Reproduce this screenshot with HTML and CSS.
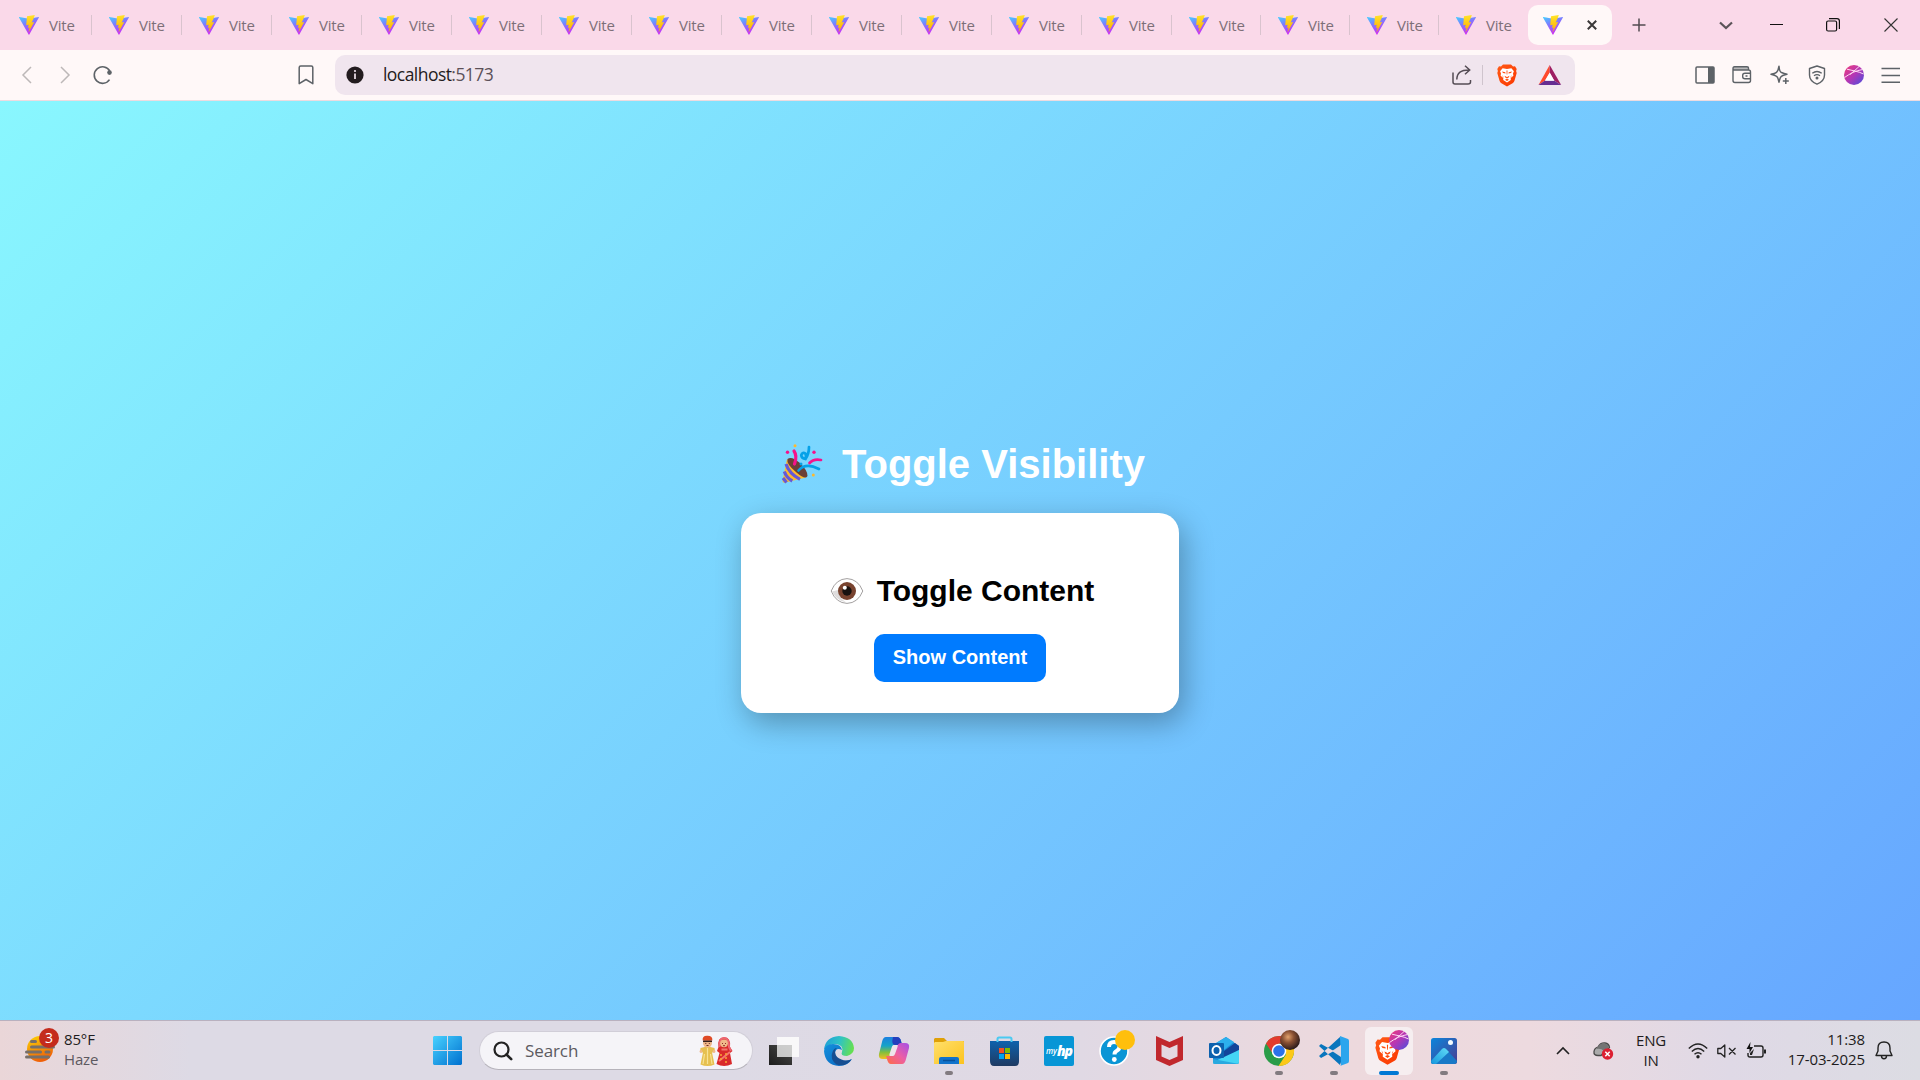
FILE: index.html
```html
<!DOCTYPE html>
<html lang="en">
<head>
<meta charset="utf-8">
<title>Vite</title>
<link rel="stylesheet" href="styles.css">
</head>
<body>
<svg class="defs" width="0" height="0">
  <defs>
    <linearGradient id="vg" x1="0" y1="0" x2=".5" y2="1"><stop offset="0" stop-color="#41d1ff"/><stop offset=".45" stop-color="#7d7bff"/><stop offset="1" stop-color="#d02cf5"/></linearGradient>
    <linearGradient id="vy" x1="0" y1="0" x2="0" y2="1"><stop offset="0" stop-color="#ffe52a"/><stop offset="1" stop-color="#ffa800"/></linearGradient>
    <linearGradient id="orb" x1="0" y1="0" x2="1" y2="1"><stop offset="0" stop-color="#f23a78"/><stop offset=".5" stop-color="#b437b5"/><stop offset="1" stop-color="#454fe0"/></linearGradient>
    <linearGradient id="win" x1="0" y1="0" x2="1" y2="1"><stop offset="0" stop-color="#48d2ff"/><stop offset="1" stop-color="#0070cf"/></linearGradient>
    <linearGradient id="haze" x1="0" y1="0" x2=".4" y2="1"><stop offset="0" stop-color="#fcd606"/><stop offset="1" stop-color="#ef6008"/></linearGradient>
    <linearGradient id="lion" x1="0" y1="0" x2="1" y2="1"><stop offset="0" stop-color="#ff5a16"/><stop offset="1" stop-color="#fb3700"/></linearGradient>
    <linearGradient id="edg" x1="0" y1=".3" x2="1" y2=".5"><stop offset="0" stop-color="#1e9fd8"/><stop offset=".5" stop-color="#2fc3c4"/><stop offset="1" stop-color="#67e04f"/></linearGradient>
    <linearGradient id="edb" x1="0" y1="0" x2="1" y2="1"><stop offset="0" stop-color="#1390dd"/><stop offset="1" stop-color="#0a63bd"/></linearGradient>
    <linearGradient id="cop1" x1="0" y1="0" x2="0" y2="1"><stop offset="0" stop-color="#1b7fe0"/><stop offset=".4" stop-color="#16a3c8"/><stop offset=".7" stop-color="#83bf3c"/><stop offset="1" stop-color="#f4bd22"/></linearGradient>
    <linearGradient id="cop2" x1="1" y1="0" x2="0" y2="1"><stop offset="0" stop-color="#a44fe8"/><stop offset=".5" stop-color="#ec5fa5"/><stop offset="1" stop-color="#ff6d3f"/></linearGradient>
    <linearGradient id="fold" x1="0" y1="0" x2="1" y2="1"><stop offset="0" stop-color="#ffdf6b"/><stop offset="1" stop-color="#fcc31e"/></linearGradient>
    <linearGradient id="store" x1="0" y1="0" x2="0" y2="1"><stop offset="0" stop-color="#0e62ad"/><stop offset="1" stop-color="#1f3a62"/></linearGradient>
    <linearGradient id="pho" x1="0" y1="0" x2="1" y2="1"><stop offset="0" stop-color="#0b86dc"/><stop offset="1" stop-color="#4c3c91"/></linearGradient>
    <linearGradient id="pk" x1="1" y1="0" x2="0" y2="1"><stop offset="0" stop-color="#61dcf7"/><stop offset="1" stop-color="#1596dd"/></linearGradient>
    <radialGradient id="face" cx=".4" cy=".35" r=".65"><stop offset="0" stop-color="#e2a26c"/><stop offset=".45" stop-color="#895033"/><stop offset="1" stop-color="#2b1b1b"/></radialGradient>
    <linearGradient id="dark" x1="0" y1="1" x2="1" y2="0"><stop offset="0" stop-color="#1c1c1c"/><stop offset="1" stop-color="#4a4a48"/></linearGradient>
    <symbol id="vite" viewBox="0 0 20 20">
      <path d="M.3 2 10 3.800l9.700-1.800q.5 0 .2.600L10.300 19.500q-.3.500-.7 0L0 2.600q-.2-.6.3-.6z" fill="url(#vg)"/>
      <path d="M15.800 0 8 1.300 7.200 10.200l2.500-.5-.8 3.200 1.700-.4-1.100 5L15.200 7l-2.500.4L14.800 3z" fill="url(#vy)"/>
    </symbol>
    <symbol id="brave" viewBox="0 0 20 22">
      <path d="M6 0h8l2 2 2-.2 1.700 2.600-.6 2 .6 2-2.300 8.200q-.4 1.200-1.400 2L10 22l-6-3.400q-1-.8-1.400-2L.3 8.400l.6-2-.6-2L2 1.800l2 .2z" fill="url(#lion)"/>
      <path d="m10 4.600 4.400-.8 2.500 3-.9 2.200.4 2.200-2.700 2.400.1 2L10 18l-3.800-2.400.1-2-2.700-2.400L4 9l-.9-2.200 2.500-3z" fill="#fff"/>
      <path d="m5 7 3.300.700L8.500 9 6 8.600zM15 7l-3.300.7-.2 1.300L14 8.600zM9.500 6h1L10.300 10h-.6zM7.500 11.300l1.500.7 1 .8 1-.8 1.500-.7-.8 1.800-1.700.9-1.700-.9zM5.200 10.300l1.300 2.200-.3.800zM14.800 10.300l-1.300 2.200.3.800zM8 15.200l2-1 2 1-2 1.400z" fill="#ff4b0c"/>
    </symbol>
    <symbol id="orbit" viewBox="0 0 20 20">
      <circle cx="10" cy="10" r="10" fill="url(#orb)"/>
      <path d="M.5 12.500C6 8.500 12 5.500 18.300 4.600M3 4.200C8 5.500 15 6.500 19.500 9M15 1.500C12.500 4 10 6 6 9.500" fill="none" stroke="#ffd9f4" stroke-width="1"/>
    </symbol>
  </defs>
</svg>

<header class="tabs" id="tabs">
  <div class="tab-list" id="tab-list"></div>
  <div class="tab-active">
    <svg width="20" height="20"><use href="#vite"/></svg>
    <svg class="tab-close" width="10" height="10" viewBox="0 0 10 10"><path d="m.8.800 8.400 8.400M9.200.8.800 9.200" stroke="#3b3838" stroke-width="2"/></svg>
  </div>
  <svg class="plus" width="14" height="14" viewBox="0 0 14 14"><path d="M7 .5v13M.5 7h13" stroke="#524b50" stroke-width="1.500"/></svg>
  <div class="window-buttons">
    <svg width="14" height="9" viewBox="0 0 14 9"><path d="m1 1.500 6 5.500 6-5.500" fill="none" stroke="#5b5358" stroke-width="2.200"/></svg>
    <svg width="13" height="14" viewBox="0 0 13 14"><path d="M0 6.500h13" stroke="#111"/></svg>
    <svg width="14" height="14" viewBox="0 0 14 14"><rect x=".6" y="3" width="10" height="10" rx="1.500" fill="none" stroke="#111" stroke-width="1.200"/><path d="M3 .6h8q2.400 0 2.400 2.400v8" fill="none" stroke="#111" stroke-width="1.200"/></svg>
    <svg width="14" height="14" viewBox="0 0 14 14"><path d="m.5.500 13 13m0-13-13 13" stroke="#333" stroke-width="1.100"/></svg>
  </div>
</header>

<div class="toolbar">
  <div class="nav-icons">
    <svg width="10" height="18" viewBox="0 0 10 18"><path d="M9 1 1 9l8 8" fill="none" stroke="#bdb8b8" stroke-width="1.500"/></svg>
    <svg width="10" height="18" viewBox="0 0 10 18"><path d="m1 1 8 8-8 8" fill="none" stroke="#bdb8b8" stroke-width="1.500"/></svg>
    <svg width="20" height="20" viewBox="0 0 20 20"><path d="M16.500 14.600A8.300 8.300 0 1 1 16.800 6" fill="none" stroke="#5d6267" stroke-width="1.600"/><circle cx="16.500" cy="7.600" r="2.300" fill="#5d6267"/></svg>
  </div>
  <svg class="bookmark" width="16" height="20" viewBox="0 0 16 20"><path d="M1.200 2.500Q1.200.9 2.700.9h10.600q1.500 0 1.500 1.600v16.200L8 14.500l-6.800 4.200z" fill="none" stroke="#5d6267" stroke-width="1.500" stroke-linejoin="round"/></svg>
  <div class="address">
    <svg class="info" width="18" height="18" viewBox="0 0 18 18"><circle cx="9" cy="9" r="8.600" fill="#231c1f"/><path d="M9 7.500V13" stroke="#f1e4ef" stroke-width="1.700"/><circle cx="9" cy="5" r="1.100" fill="#f1e4ef"/></svg>
    <span class="url">localhost<span class="port">:5173</span></span>
    <div class="address-icons">
      <svg width="20" height="20" viewBox="0 0 20 20"><path d="M1 7.500V17q0 2 2 2h13q2.500 0 2.500-2v-2M4.800 14.500C5 8 8 5 17.500 5M13 .8 17.700 5 13 9.300" fill="none" stroke="#544c54" stroke-width="1.500"/></svg>
      <i class="address-sep"></i>
      <svg class="shield" width="20" height="23"><use href="#brave"/></svg>
      <svg width="24" height="20" viewBox="0 0 24 20"><path d="M11.700 0v8L7 15.500.5 20z" fill="#ff4a2c"/><path d="m11.700 0 11.500 20L16 15.500 11.700 8z" fill="#9e1f63"/><path d="M.5 20 7 15.500h9l7.200 4.500z" fill="#662d91"/><path d="m11.700 7.500 4.700 8.200H7z" fill="#fff"/></svg>
    </div>
  </div>
  <div class="actions">
    <svg width="20" height="20" viewBox="0 0 20 20"><rect x="1" y="2" width="18" height="16" rx="1" fill="none" stroke="#5d6267" stroke-width="1.500"/><path d="M13 2h6v16h-6z" fill="#5d6267"/></svg>
    <svg width="20" height="20" viewBox="0 0 20 20"><path d="M1 3q0-1.300 1.500-1.300h12.500q1.500 0 1.500 1.300v2H3Q1 5 1 3z" fill="#b9b8ba"/><path d="M16.500 5V3q0-1.300-1.500-1.300H2.500Q1 1.700 1 3.500V15.500q0 2 2 2h13.500q2 0 2-2V7q0-2-2-2H3Q1 5 1 3.500M18.500 8.200H13q-2.300 0-2.300 2v1.600q0 2 2.300 2h5.500M13.500 11h2" fill="none" stroke="#5d6267" stroke-width="1.400"/></svg>
    <svg width="20" height="20" viewBox="0 0 20 20"><path d="M9 1.200Q9.500 7 11.500 7.500 14 8.500 17 9.200 12.500 10 11.200 11.500 10 12.500 9 17.200 8 12.500 6.800 11.500 5 10 1 9.200 5 8.500 6.500 7.300 8.200 6 9 1.200z" fill="none" stroke="#5d6267" stroke-width="1.500" stroke-linejoin="round"/><path d="M15.800 13v6M12.800 16h6" stroke="#5d6267" stroke-width="1.500"/></svg>
    <svg width="20" height="20" viewBox="0 0 20 20"><path d="m10 1 7.500 2.500V10q0 6-7.500 9.200Q2.500 16 2.500 10V3.500z" fill="none" stroke="#5d6267" stroke-width="1.400" stroke-linejoin="round"/><path d="M5.300 8.200q4.700-3.500 9.400 0M7 10.700q3-2.200 6 0" fill="none" stroke="#5d6267" stroke-width="1.400"/><circle cx="10" cy="13" r="1.500" fill="#5d6267"/></svg>
    <svg width="20" height="20"><use href="#orbit"/></svg>
    <svg width="20" height="20" viewBox="0 0 20 20"><path d="M.5 3.500h18.500M.5 10.500h18.500M.5 17.300h18.500" stroke="#5d6267" stroke-width="1.500"/></svg>
  </div>
</div>

<main class="page">
  <h1 class="title">
    <svg width="42" height="40" viewBox="0 0 42 40">
      <path d="M6 15 1.500 37q0 2 2 1.800L25 33.500z" fill="#fdb92e"/>
      <path d="M6.500 15q4-3.500 12.500 4 8 8 7.500 13-2 4.500-11-3.500Q5 20 6.500 15z" fill="#6b3f37"/>
      <path d="M5 20q3 9.500 14 15.300M3.300 27.500q2 6 8 9.500M2 34l3.500 4.500" stroke="#6559d8" stroke-width="3.200" fill="none"/>
      <path d="M13 7q3.500 5 .5 13" stroke="#f5138b" stroke-width="3.200" fill="none" stroke-linecap="round"/>
      <path d="M17.500 26.500q7-8.500 20.500-1.500M28 3q0 7-3.500 12-4-.5-4.300-3.800 1.300-3.500 4.300-1.500 1 2 0 5.300" stroke="#05a1e8" stroke-width="2.700" fill="none" stroke-linecap="round"/>
      <path d="M28.500 19q4-4.500 11.500-3" stroke="#f5138b" stroke-width="2.700" fill="none" stroke-linecap="round"/>
      <circle cx="6.500" cy="8.300" r="1.700" fill="#f5138b"/><circle cx="33" cy="8.300" r="1.700" fill="#f5138b"/><circle cx="14" cy="1.800" r="1.500" fill="#fdb92e"/><circle cx="32.300" cy="31" r="1.500" fill="#fdb92e"/><circle cx="20" cy="20" r="1.500" fill="#05a1e8"/>
    </svg>
    <span>Toggle Visibility</span>
  </h1>
  <section class="card">
    <h2 class="card-title">
      <svg width="34" height="28" viewBox="0 0 34 28"><path d="M1.200 14Q6 2 17 1.600 28 2 32.800 14 28 26 17 26.400 6 26 1.200 14z" fill="#fff" stroke="#8c8888" stroke-width=".8"/><path d="M2 14.500Q7 24 16 25.300 9 21 8 13z" fill="#dedcdc"/><circle cx="17" cy="14" r="9" fill="#78432f"/><circle cx="17" cy="14" r="4.700" fill="#17110f"/><circle cx="14.800" cy="10.800" r="2" fill="#fff"/></svg>
      <span>Toggle Content</span>
    </h2>
    <button class="show-button">Show Content</button>
  </section>
</main>

<footer class="taskbar">
  <div class="weather">
    <div class="weather-icon">
      <svg width="30" height="28" viewBox="0 0 30 28"><circle cx="15" cy="14" r="13" fill="url(#haze)"/><path d="M6.500 6.500h4M6.500 12h22M1.500 17h14M21 17h3M1.500 22h22" stroke="#776f69" stroke-width="3" stroke-linecap="round"/></svg>
      <span class="badge">3</span>
    </div>
    <div class="weather-text"><div>85°F</div><div class="muted">Haze</div></div>
  </div>

  <div class="apps">
    <svg class="start" width="29" height="29" viewBox="0 0 29 29"><path d="M1 0h13v14H0V1zM15 0h13l1 1v13H15zM0 15h14v14H1l-1-1zM15 15h14v13l-1 1H15z" fill="url(#win)"/></svg>
    <div class="search">
      <svg width="20" height="20" viewBox="0 0 20 20"><circle cx="8.500" cy="8.500" r="7" fill="none" stroke="#222" stroke-width="2.200"/><path d="m13.500 13.500 4.700 4.700" stroke="#222" stroke-width="2.600" stroke-linecap="round"/></svg>
      <span>Search</span>
      <svg class="couple" width="34" height="32" viewBox="0 0 34 32">
        <path d="M5.500 12h6l4 1 .5 4-3 .500 2.500 12q-7 3-14 0l2.500-12-3-.5.5-4z" fill="#e6c050"/><path d="M8.500 13v16M5.500 19 4 29M11.500 19l1.500 10" stroke="#f7e294" stroke-width="1.200" fill="none"/><circle cx="2" cy="16.500" r="1.400" fill="#f0b98a"/><circle cx="15" cy="16.500" r="1.400" fill="#f0b98a"/>
        <circle cx="8.500" cy="8" r="4.500" fill="#f0b98a"/><path d="M3.700 5.500Q3 .5 8.500.8q5.500 0 4.800 4.700z" fill="#df4a26"/><path d="M4 6.300h9" stroke="#35211c" stroke-width="1.500"/><path d="M6.300 8.500h1M9.800 8.500h1M7.500 10.500h2" stroke="#6b3328"/>
        <path d="M19.500 12q-1.500-9.500 5.500-9.700 7 0 6 9.700l2.500 4-2.500 2 2 11q-8 4-15.500 0l3-11-2.500-2z" fill="#d9292a"/><path d="M20.500 12Q20 3 25 3t5 9l2 4" fill="none" stroke="#ed6671" stroke-width="2"/><circle cx="25" cy="8.300" r="3.900" fill="#f0b98a"/><path d="M22.500 14.500h6M20 26l11-9" stroke="#f4776d" stroke-width="2" fill="none"/><path d="M22 19v8M27 18v11" stroke="#f6a736" stroke-width="1.500" stroke-dasharray="2 2"/><path d="M23 8.500h1M26 8.500h1M24 10.700h2" stroke="#8e302c"/>
      </svg>
    </div>
    <div class="app"><svg width="30" height="30" viewBox="0 0 30 30"><path d="M0 9h23v20H0z" fill="url(#dark)"/><path d="M8 1h22v20H8z" fill="#f3f3f3" fill-opacity=".78"/><path d="M8 1h22v20h-7V9H8z" fill="#fff" fill-opacity=".6"/></svg></div>
    <div class="app"><svg width="30" height="30" viewBox="0 0 30 30"><path d="M0 14Q1 1 15 0q14 1 15 12 0 6-7 8-7 0-5-4 2-7-6-8Q5 7 0 14z" fill="url(#edg)"/><path d="M0 15Q1 8 9 8q8 0 9 6-6-3-7 3 0 7 9 8 4 0 8-2-4 7-13 7Q1 29 0 15z" fill="url(#edb)"/><path d="M8.500 16q-3 7 4 12.500 9 3 15-5-6 2-10 0-6-2-6.500-7.500 0-3 2-4-3 0-4.500 4z" fill="#164e91"/></svg></div>
    <div class="app"><svg width="30" height="27" viewBox="0 0 30 27"><path d="M7 0h11q3 0 4 4l1 4h-5q-3 0-4 4l-2 7q-1 3-4 3H4q-5 0-4-5L3 5q1-5 4-5z" fill="url(#cop1)"/><path d="M14 0h4q3 0 4 4l1 4h-7q-4 0-2-8z" fill="#243fbd"/><path d="M23 27H12q-3 0-4-5l-1-3h5q3 0 4-4l2-5q1-4 4-4h4q5 0 4 5l-3 11q-1 5-4 5z" fill="url(#cop2)"/><path d="M14.500 8h3.500q1 0 .5 2l-2.500 7q-.7 2-2 2h-3q-1 0-.5-2l2.500-7.500q.5-1.500 1.500-1.500z" fill="#efe4ec"/></svg></div>
    <div class="app"><svg width="30" height="28" viewBox="0 0 30 28"><path d="M1 1h9l3 3h17v4H0V2z" fill="#dfa008"/><path d="M1 5h8l3-1h17q1 0 1 1v22H0V6z" fill="url(#fold)"/><path d="M5 27v-5q0-2 2-2h16q2 0 2 2v5z" fill="#1273cb"/><path d="M9 23.500h12" stroke="#09519a" stroke-width="1.500"/></svg><i class="run-dot"></i></div>
    <div class="app"><svg width="29" height="30" viewBox="0 0 29 30"><path d="M0 5h29v20q0 5-4 5H4q-4 0-4-5z" fill="url(#store)"/><path d="M7.500 6V3q0-1.500 1.500-1.500h11q1.500 0 1.500 1.500v3" fill="none" stroke="#4bcaf1" stroke-width="2"/><path d="M9 12h5v5H9z" fill="#f25022"/><path d="M15 12h5v5h-5z" fill="#7fba00"/><path d="M9 18h5v5H9z" fill="#00a4ef"/><path d="M15 18h5v5h-5z" fill="#ffb900"/></svg></div>
    <div class="app"><div class="myhp"><span>my</span><b>hp</b></div></div>
    <div class="app"><svg class="help" width="36" height="36" viewBox="0 0 36 36"><circle cx="15" cy="21" r="14" fill="#0a95d5" stroke="#fff" stroke-width="1.600"/><path d="M10 17q0-5 5-5 5.500 0 5.500 4.500 0 3-3 4.500-2 1-2 3.500" fill="none" stroke="#fff" stroke-width="4"/><circle cx="15.300" cy="29.500" r="2.400" fill="#fff"/><circle cx="26" cy="10" r="10" fill="#ffbf0c"/></svg></div>
    <div class="app"><svg width="27" height="30" viewBox="0 0 27 30"><path d="m0 0 13.500 6L27 0v24l-13.500 6L0 24zm5.500 8.500v12l8 3.600 8-3.600v-12l-8 3.500z" fill="#c1282d" fill-rule="evenodd"/></svg></div>
    <div class="app"><svg width="30" height="27" viewBox="0 0 30 27"><path d="M4 8 17 0l13 9v16q0 2-2 2H6q-2 0-2-2z" fill="#1688d5"/><path d="m7 6 10-6 8 5-10 8z" fill="#2cb0ed"/><path d="m15 14 11-8 4 3v4l-15 9z" fill="#12449a"/><path d="M30 13v12q0 2-2 2H6q-2 0-2-2l11-5z" fill="#45d5f5"/><path d="M4 22 30 27H6q-2 0-2-2z" fill="#29a9df"/><rect y="6" width="15" height="15" rx="1" fill="#0c61ae"/><ellipse cx="7.500" cy="13.500" rx="4" ry="4.500" fill="none" stroke="#fff" stroke-width="2"/></svg></div>
    <div class="app"><svg class="chrome" width="36" height="36" viewBox="0 0 36 36"><circle cx="15" cy="21" r="15" fill="#2a9c48"/><path d="M2 13.500A15 15 0 0 1 28 13.500H15L9 24z" fill="#e33b2e"/><path d="M28 13.500A15 15 0 0 1 14.500 36L22 24.500 20 13.500z" fill="#fcc818"/><circle cx="15" cy="21" r="7.300" fill="#fff"/><circle cx="15" cy="21" r="5.800" fill="#2c72e9"/><circle cx="26" cy="10" r="10" fill="url(#face)"/></svg><i class="run-dot"></i></div>
    <div class="app"><svg width="30" height="30" viewBox="0 0 30 30"><path d="m2 8-2 2 21 19 3-9zM2 22l-2-2L21 1l3 9z" fill="#0875bd"/><path d="m21 0 8 3q1 .500 1 2v20q0 1.500-1 2l-8 3 1-1z" fill="#2ca5ed"/><path d="M22 9v12l-9-6z" fill="#dfd6e0"/></svg><i class="run-dot"></i></div>
    <div class="app active"><svg class="brave-app" width="34" height="36" viewBox="0 0 34 36"><use href="#brave" y="6" width="25" height="30"/><use href="#orbit" x="14" width="20" height="20"/></svg><i class="run-bar"></i></div>
    <div class="app"><svg width="26" height="26" viewBox="0 0 26 26"><rect width="26" height="26" rx="2.500" fill="url(#pho)"/><path d="M0 24 11 11q2-2 4 0l11 12q0 3-3 3H3q-3 0-3-2z" fill="#1979c7"/><path d="M0 23 11 11q2-2 4 0l3 3L5 26H3q-3 0-3-3z" fill="url(#pk)"/><circle cx="19.500" cy="4.500" r="2.500" fill="#f3fbff"/></svg><i class="run-dot"></i></div>
  </div>

  <div class="tray">
    <svg class="chevron" width="14" height="8" viewBox="0 0 14 8"><path d="m1 7 6-6 6 6" fill="none" stroke="#222" stroke-width="1.600"/></svg>
    <svg class="cloud" width="21" height="18" viewBox="0 0 21 18"><path d="M5 13.500q-4.500 0-4-4Q1.500 6 5 5q2.500-4.500 7-4 4 .5 4.500 4.500L8 13.500z" fill="#aaa" stroke="#4b4a4a" stroke-width="1.300"/><path d="M3 7q5-1 8 2l5-4q-2-4-6-4-4 1-5 4z" fill="#747474"/><circle cx="14.500" cy="12" r="5.700" fill="#dc1f31"/><path d="m12.300 9.800 4.400 4.400m0-4.400-4.400 4.400" stroke="#fff" stroke-width="1.500"/></svg>
    <div class="lang"><div>ENG</div><div>IN</div></div>
    <svg class="wifi" width="20" height="16" viewBox="0 0 20 16"><path d="M.8 5.500q9.200-9 18.400 0M3.800 8.500q6.200-6 12.400 0M6.500 11.300q3.500-3.200 7 0" fill="none" stroke="#222" stroke-width="1.400"/><circle cx="10" cy="13.700" r="1.700" fill="#222"/></svg>
    <svg class="sound" width="20" height="14" viewBox="0 0 20 14"><path d="M.8 4.500v5h3l4 3.500V1l-4 3.500zM12 4l6.500 6.500m0-6.500L12 10.500" fill="none" stroke="#222" stroke-width="1.300" stroke-linejoin="round"/></svg>
    <svg class="battery" width="21" height="17" viewBox="0 0 21 17"><path d="M8 4h7q2 0 2 2v7q0 2-2 2H4q-2 0-2-2v-2" fill="none" stroke="#222" stroke-width="1.400"/><path d="M18 7.500h2v4h-2z" fill="#222"/><path d="M4.500 0 .5 7h3v4L7 5H4z" fill="#111"/><path d="M4 13v-2l4-4-2 6z" fill="#222"/></svg>
    <div class="clock"><div>11:38</div><div class="date">17-03-2025</div></div>
    <svg class="bell" width="18" height="19" viewBox="0 0 18 19"><path d="M1 14.500 3 10V7q0-6 6-6t6 6v3l2 4.500zM6.500 15q0 2.700 2.500 2.700t2.500-2.700" fill="none" stroke="#222" stroke-width="1.400" stroke-linejoin="round"/></svg>
  </div>
</footer>
<script src="tabs.js"></script>
</body>
</html>
```

FILE: tabs.js
```js
const list = document.getElementById('tab-list');
for (let i = 0; i < 17; i++) {
  const tab = document.createElement('div');
  tab.className = i < 13 ? 'tab' : 'tab narrow';
  tab.innerHTML = '<svg width="20" height="20"><use href="#vite"/></svg><span>Vite</span>';
  list.append(tab);
}
```

FILE: styles.css
```css
* { box-sizing: border-box; }
body { margin: 0; width: 1920px; height: 1080px; overflow: hidden; display: flex; flex-direction: column; font-family: "Open Sans", "Noto Sans", sans-serif; }
svg { display: block; flex: none; overflow: visible; }
.defs { position: absolute; }

.tabs { height: 50px; flex: none; background: #fad9e9; display: flex; align-items: center; padding-left: 2px; }
.tab-list { display: flex; }
.tab { width: 90px; height: 20px; padding-left: 17px; display: flex; align-items: center; gap: 10px; font-size: 15px; line-height: 20px; letter-spacing: -.2px; color: #7d6f78; border-right: 1px solid #d9c3ce; }
.tab.narrow { width: 89px; }
.tab:last-child { border-right: 0; }
.tab-active { width: 84px; height: 40px; background: #fff8f8; border-radius: 10px; padding: 0 15px; display: flex; align-items: center; justify-content: space-between; }
.plus { margin-left: 20px; }
.window-buttons { margin-left: auto; padding-right: 22px; width: 222px; display: grid; grid-template-columns: 51px 56px 58px 14px; justify-content: end; align-items: center; }

.toolbar { height: 51px; flex: none; background: #fff8f8; border-bottom: 1px solid #eddbe0; display: flex; align-items: center; }
.nav-icons { display: flex; align-items: center; gap: 26px; width: 298px; padding-left: 22px; }
.nav-icons svg:nth-child(2) { margin-left: 2px; }
.nav-icons svg:nth-child(3) { margin-left: -3px; }
.bookmark { margin: 0 21px 0 0; }
.address { width: 1240px; height: 40px; border-radius: 10px; background: #f0e5ee; display: flex; align-items: center; padding: 0 13px 0 11px; }
.url { margin: -2px 0 0 19px; font-size: 17.500px; line-height: 24px; letter-spacing: -.55px; color: #241b20; }
.port { color: #5c5158; }
.address-icons { margin-left: auto; display: flex; align-items: center; }
.address-sep { width: 1px; height: 20px; background: #cfc4cd; margin: 0 14px 0 10px; }
.shield { margin-right: 21px; }
.actions { margin-left: 120px; display: flex; gap: 17.300px; }

.page { flex: 1; min-height: 0; background: linear-gradient(135deg, #89f7fe, #66a6ff); font-family: "Liberation Sans", Arial, sans-serif; display: flex; flex-direction: column; align-items: center; padding-top: 339px; }
.title { margin: 0 0 26px; display: flex; align-items: center; gap: 19px; height: 47px; color: #fff; font-size: 40px; line-height: 46px; font-weight: 700; padding-left: 6px; }
.card { width: 438px; height: 200px; border-radius: 20px; background: #fff; box-shadow: 5px 10px 30px rgba(0, 0, 0, .3); display: flex; flex-direction: column; align-items: center; padding-top: 60px; }
.card-title { margin: 0 0 26px; display: flex; align-items: center; gap: 13px; height: 35px; padding-left: 4px; color: #000; font-size: 30px; line-height: 35px; }
.show-button { width: 172px; height: 48px; border: 0; border-radius: 10px; background: #007bff; color: #fff; font: 700 20px/23px "Liberation Sans", Arial, sans-serif; padding: 0 0 1px; }

.taskbar { height: 60px; flex: none; border-top: 1px solid #b9b1bf; background: linear-gradient(90deg, #ead6d8 0, #dddae5 190px, #dddae5 720px, #e0d9e4 1080px, #edd9dd 1350px, #eddadf 1530px, #dfd9e6 1730px, #dcdce3 1920px); display: grid; grid-template-columns: 430px 1fr 400px; align-items: center; color: #1e1c20; font-size: 15px; line-height: 20px; }
.weather { display: flex; align-items: center; padding-left: 25px; gap: 9px; }
.weather-icon { position: relative; margin-top: -3px; }
.badge { position: absolute; top: -7px; left: 14px; width: 20px; height: 20px; border-radius: 50%; background: #c42b1c; color: #fff; text-align: center; font-size: 14px; line-height: 20px; }
.weather-text { margin-top: -4px; letter-spacing: -.15px; }
.muted { color: #5d5960; }
.apps { display: flex; align-items: center; height: 58px; }
.start { margin: 0 17px 0 3px; }
.search { width: 274px; height: 39px; margin-right: 7px; border-radius: 20px; background: #f5f4f8; border: 1px solid #d1ced8; border-bottom-color: #b6b3bb; display: flex; align-items: center; padding: 0 19px 0 13px; font-size: 17px; letter-spacing: -.1px; color: #5c5a60; }
.search span { margin-left: 12px; }
.couple { margin-left: auto; }
.app { width: 48px; height: 48px; margin-right: 7px; display: flex; align-items: center; justify-content: center; position: relative; flex: none; }
.run-dot, .run-bar { position: absolute; bottom: 0; left: 20px; width: 8px; height: 4px; border-radius: 2px; background: #827b80; }
.run-bar { left: 14px; width: 20px; background: #0078d4; }
.active { background: #f6eef0; border-radius: 6px; }
.help, .chrome, .brave-app { margin: -6px -6px 0 0; }
.myhp { width: 30px; height: 30px; border-radius: 2px; background: #0796d6; color: #fff; display: flex; align-items: center; justify-content: center; font: italic 600 8px/14px "Open Sans", sans-serif; }
.myhp b { font-size: 14px; letter-spacing: -1px; }
.tray { display: flex; align-items: center; height: 58px; padding-left: 36px; }
.cloud { margin-left: 23px; }
.lang { width: 40px; margin: -2px 0 0 17px; text-align: center; letter-spacing: -.15px; }
.wifi { margin-left: 17px; }
.sound { margin-left: 9px; }
.battery { margin-left: 9px; }
.clock { width: 88px; margin: -3px 0 0 10px; text-align: right; letter-spacing: -.1px; }
.bell { margin-left: 10px; }
```
